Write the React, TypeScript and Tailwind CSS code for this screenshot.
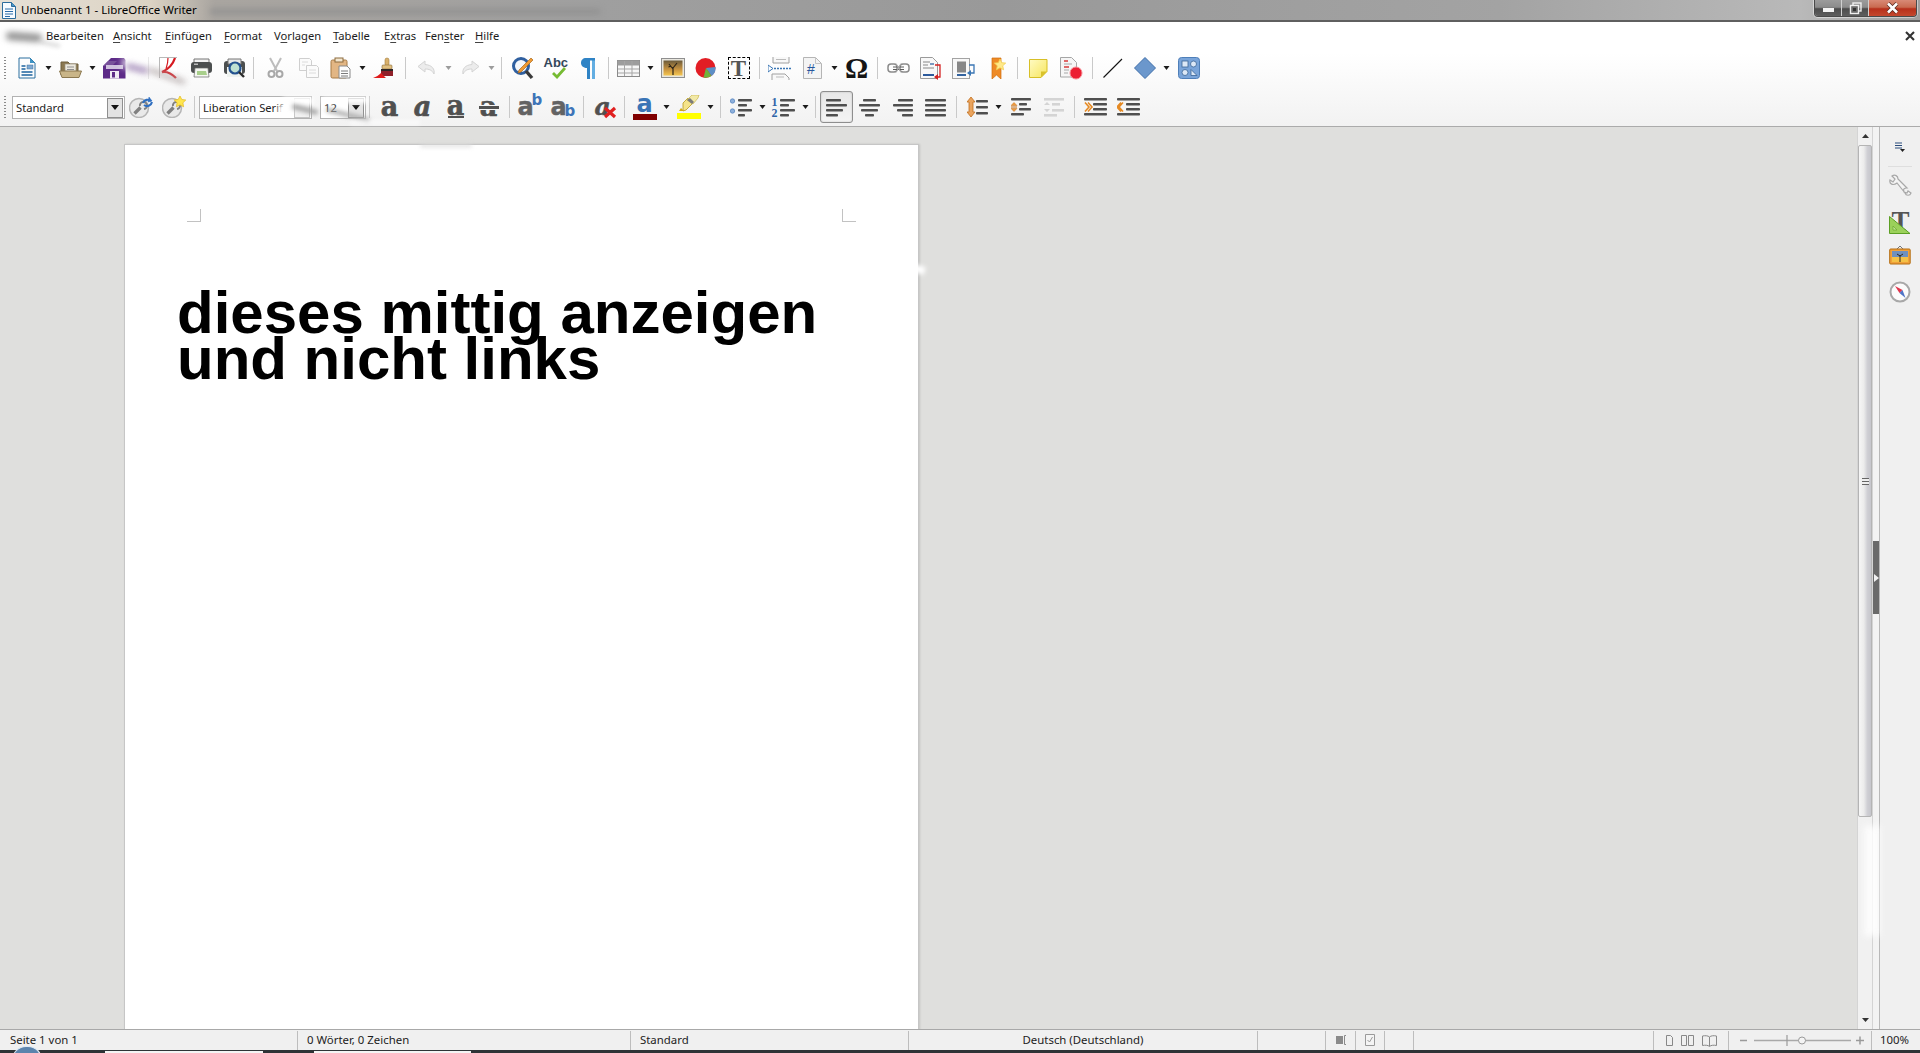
import React from "react";

type C = { children?: React.ReactNode };
const S = ({ w, h, children }: { w: number; h: number } & C) => (
  <svg width={w} height={h} viewBox={`0 0 ${w} ${h}`} className="block shrink-0" fill="none">
    {children}
  </svg>
);

/* ---------- layout atoms ---------- */
const Btn = ({ children, cls = "" }: { cls?: string } & C) => (
  <div className={`w-[33px] h-full flex items-center justify-center shrink-0 ${cls}`}>{children}</div>
);
const Dd = ({ dim = false, cls = "" }: { dim?: boolean; cls?: string }) => (
  <div className={`w-[11px] h-full flex items-center justify-center shrink-0 ${cls}`}>
    <S w={7} h={4}>
      <path d="M0.5 0h6L3.5 4z" fill={dim ? "#9c9c9c" : "#1c1c1c"} />
    </S>
  </div>
);
const Sep = ({ cls = "" }: { cls?: string }) => (
  <div className={`w-[9px] h-full flex items-center justify-center shrink-0 ${cls}`}>
    <div className="w-px h-[22px] bg-[#c9c9c9]" />
  </div>
);
const Grip = ({ cls }: { cls: string }) => (
  <div className={`h-full flex items-center shrink-0 ${cls}`}>
    <div className="ml-[4px] w-[2px] h-[23px] bg-[repeating-linear-gradient(to_bottom,#8a8a8a_0px,#8a8a8a_1px,transparent_1px,transparent_3px)]" />
  </div>
);

/* ---------- icons: toolbar 1 ---------- */
const NewDoc = () => (
  <S w={18} h={22}>
    <path d="M1 1h11l5 5v15H1z" fill="#fdfdfd" stroke="#2b6f9f" />
    <path d="M12 1l5 5h-5z" fill="#3f93c4" />
    <rect x="9" y="8" width="6" height="4" fill="#7ea9d2" stroke="#3d6f9f" strokeWidth=".5" />
    <path d="M3.5 9h4M3.5 12h4M3.5 15h11M3.5 18h11" stroke="#1d639f" strokeWidth="1.4" />
  </S>
);
const OpenF = () => (
  <S w={23} h={19}>
    <path d="M2 3h7l2 2h8v11H2z" fill="#8b7850" stroke="#6f5f3d" />
    <rect x="6" y="5" width="11" height="8" fill="#ece8dd" stroke="#9b9480" strokeWidth=".7" />
    <path d="M8 8h7M8 10.5h7" stroke="#8f8f8f" />
    <path d="M0.5 12h22l-2.5 6.5H3z" fill="#c9b588" stroke="#8b7850" />
  </S>
);
const Save = () => (
  <S w={23} h={22}>
    <path d="M0 9L8 1h13l1.500 2v18.500H0z" fill="#5d2b88" />
    <path d="M3 8h17v4H3z" fill="#cfc0de" />
    <path d="M0 9L5 4h9l-4 4H3l-1 1z" fill="#8a6aa8" opacity=".6" />
    <rect x="7" y="14" width="9" height="7.500" fill="#efeaf4" />
    <rect x="9" y="15" width="3" height="5.500" fill="#5d2b88" />
  </S>
);
const Pdf = () => (
  <S w={19} h={22}>
    <path d="M.5 21V.5h17.500" fill="#fff" stroke="#b8b8b8" />
    <path d="M.5 1h17.500v19H.5z" fill="#fff" />
    <path d="M.5 21V.5h17.500" stroke="#b8b8b8" />
    <path d="M16 1C14 7 10 12 3 15c5-1 9 1 14 6" stroke="#d61920" strokeWidth="2.300" />
    <path d="M9 1C9 6 8 9 7 12" stroke="#d61920" strokeWidth="1.200" />
  </S>
);
const Print = () => (
  <S w={23} h={20}>
    <path d="M4 1h15v6H4z" fill="#f2f2f2" stroke="#777" />
    <rect x="1" y="4" width="21" height="11" rx="3" fill="#4c4f4f" />
    <rect x="4" y="5.5" width="4" height="1.5" fill="#bbb" />
    <path d="M5 10h13l1 9H4z" fill="#f5f7f2" stroke="#666" strokeWidth=".7" />
    <path d="M7 13h9l1 4H7z" fill="#a8cf8b" />
  </S>
);
const Preview = () => (
  <S w={23} h={20}>
    <rect x="1" y="3" width="21" height="13" rx="3" fill="#4c4f4f" />
    <path d="M5 1h13v5H5z" fill="#e8e8e8" stroke="#777" />
    <path d="M4 9h15v10H4z" fill="#eef2ef" />
    <circle cx="12" cy="10" r="5.5" fill="#bfe0d2" stroke="#24528f" strokeWidth="2.2" />
    <path d="M16 14l5 5" stroke="#2b2b2b" strokeWidth="2.4" />
  </S>
);
const Cut = () => (
  <S w={17} h={22}>
    <path d="M3 1l7 13M14 1L7 14" stroke="#bdbdbd" strokeWidth="2" />
    <circle cx="4.5" cy="17" r="3" stroke="#a8a8a8" strokeWidth="2" />
    <circle cx="12.5" cy="17" r="3" stroke="#a8a8a8" strokeWidth="2" />
  </S>
);
const Copy = () => (
  <S w={20} h={20}>
    <path d="M.5.5h10l2 2v10H.5z" fill="#fbfbfb" stroke="#cfcfcf" />
    <path d="M7.5 7.5h10l2 2v10h-12z" fill="#fbfbfb" stroke="#cfcfcf" />
    <path d="M3 4h6M3 7h3M10 12h7M10 15h7" stroke="#dcdcdc" />
  </S>
);
const Paste = () => (
  <S w={21} h={22}>
    <rect x="1" y="3" width="16" height="18" rx="1.5" fill="#e2b684" stroke="#a67a44" />
    <rect x="5" y="1" width="8" height="4" fill="#f3e6cf" stroke="#8b6a3c" />
    <path d="M9 9h8l3 3v9H9z" fill="#fdfdfd" stroke="#8a8a8a" />
    <path d="M11 14h7M11 16.5h7M11 19h7" stroke="#7b7b7b" />
  </S>
);
const Brush = () => (
  <S w={23} h={22}>
    <rect x="12" y="1" width="4" height="8" rx="2" fill="#d8b06c" stroke="#a47d3a" strokeWidth=".6" />
    <rect x="9" y="8" width="10" height="4" rx="1" fill="#e0bf80" stroke="#8a6a34" strokeWidth=".6" />
    <path d="M8 12h12v7H8z" fill="#2e2626" />
    <path d="M8 14h12v5H8z" fill="#a81f2a" opacity=".8" />
    <path d="M0 21c3-1 6-3 8-5l5 5z" fill="#e01b1b" />
  </S>
);
const Undo = ({ flip = false }: { flip?: boolean }) => (
  <S w={22} h={16}>
    <g transform={flip ? "translate(22 0) scale(-1 1)" : undefined}>
      <path d="M9 1L2 6.5 9 12V9c4 0 7 1 9 5 1-5-2-9-9-9.500z" fill="#ececec" stroke="#d4d4d4" />
    </g>
  </S>
);
const Find = () => (
  <S w={24} h={24}>
    <circle cx="10" cy="10" r="7.500" fill="#f4f7fb" stroke="#2f5f9f" strokeWidth="3" />
    <path d="M15 15l6 7" stroke="#3a3a3a" strokeWidth="3.400" />
    <path d="M22 4L10 16l-3 1 1-3L20 2z" fill="#f09a33" stroke="#a7681c" strokeWidth=".7" />
  </S>
);
const AbcIc = () => (
  <div className="relative w-[24px] h-[24px]">
    <span className="block text-center text-[13px] leading-[13px] font-bold text-[#34475a] font-['Liberation_Sans',sans-serif]">Abc</span>
    <div className="absolute left-[8px] top-[11px]">
      <S w={14} h={12}>
        <path d="M1 6l4 4 8-9" stroke="#76bb33" strokeWidth="2.800" />
      </S>
    </div>
  </div>
);
const Pilcrow = () => (
  <S w={15} h={22}>
    <path d="M5 1h9v21h-3V3.500H9V22H6V11C2 11 0 8.500 0 6c0-3 2-5 5-5z" fill="#2f83c5" />
    <path d="M11 3.500h3V22h-3z" fill="#63aee2" />
  </S>
);
const TableIc = () => (
  <S w={23} h={17}>
    <rect x=".5" y=".5" width="22" height="16" fill="#f6f6f6" stroke="#8a8a8a" />
    <rect x=".5" y=".5" width="22" height="5" fill="#9d9d9d" />
    <path d="M1 9h21M1 13h21M7.500 1v15M15 1v15" stroke="#a5a5a5" />
  </S>
);
const Photo = () => (
  <S w={24} h={20}>
    <rect x=".5" y=".5" width="23" height="19" fill="#e8e6de" stroke="#8f8f8f" />
    <defs>
      <linearGradient id="sk" x1="0" y1="0" x2="0" y2="1">
        <stop offset="0" stopColor="#6a5a3a" />
        <stop offset=".6" stopColor="#c99440" />
        <stop offset="1" stopColor="#f5c64f" />
      </linearGradient>
    </defs>
    <rect x="2.500" y="2.500" width="19" height="15" fill="url(#sk)" />
    <path d="M12 17V9M12 11L8 6M12 10l4-5M10 8L7.500 9" stroke="#2c2418" strokeWidth="1.200" />
  </S>
);
const Chart = () => (
  <S w={21} h={24}>
    <circle cx="10.500" cy="12" r="10" fill="#e21d24" />
    <path d="M11 12l9.500-1a10 10 0 0 1-4 9z" fill="#5d8fc6" />
    <path d="M11 12l5.500 8a10 10 0 0 1-8 1.500z" fill="#6fb23c" />
  </S>
);
const TBox = () => (
  <div className="w-[22px] h-[22px] border border-dashed border-black flex items-center justify-center">
    <span className="text-[23px] leading-none font-bold text-[#555] font-['Liberation_Serif',serif]">T</span>
  </div>
);
const PageBreak = () => (
  <S w={23} h={23}>
    <path d="M5 0v6h16V0" fill="#f8f8f8" stroke="#a0a0a0" />
    <path d="M8 2.500h10" stroke="#bbb" />
    <path d="M0 8l5 3.500L0 15z" fill="#fff" stroke="#3a76b4" />
    <path d="M6 11.500h17" stroke="#3a76b4" strokeWidth="1.500" strokeDasharray="2 1" />
    <path d="M4 23v-6h13l4 4v2" fill="#f8f8f8" stroke="#a0a0a0" />
    <path d="M8 20h8" stroke="#bbb" />
  </S>
);
const Field = () => (
  <div className="relative w-[19px] h-[22px]">
    <S w={19} h={22}>
      <path d="M.5.500h12l6 6v15H.5z" fill="#f4f4f4" stroke="#b5b5b5" />
      <path d="M12.500.500v6h6" stroke="#c4c4c4" />
    </S>
    <span className="absolute left-[4px] top-[5px] text-[14px] leading-[14px] text-[#27569c] font-['Liberation_Sans',sans-serif]">#</span>
  </div>
);
const Omega = () => (
  <span className="text-[29px] leading-[24px] font-bold text-[#151515] font-['Liberation_Serif',serif]">Ω</span>
);
const LinkIc = () => (
  <S w={23} h={12}>
    <rect x="1" y="2" width="9" height="8" rx="3" stroke="#8a8a8a" strokeWidth="1.500" />
    <rect x="13" y="2" width="9" height="8" rx="3" stroke="#8a8a8a" strokeWidth="1.500" />
    <path d="M6 5h11M6 7.500h11" stroke="#5c5c5c" />
    <path d="M9 1.500l5 9M14 1.500l-5 9" stroke="#ababab" />
  </S>
);
const Footnote = () => (
  <S w={21} h={23}>
    <path d="M.5.500h12l5 5v16H.5z" fill="#f8f8f8" stroke="#9a9a9a" />
    <path d="M3 5h7" stroke="#888" />
    <path d="M10 7h4" stroke="#33639f" strokeWidth="1.300" />
    <path d="M3 8h5M3 11h11" stroke="#888" />
    <path d="M3 18h11" stroke="#2c5a9c" strokeWidth="2" />
    <path d="M15 8h5v12h-3" stroke="#d42222" strokeWidth="1.300" />
    <path d="M18 17v6l-4-3z" fill="#d42222" />
  </S>
);
const Endnote = () => (
  <S w={23} h={21}>
    <rect x=".5" y=".5" width="17" height="20" fill="#f8f8f8" stroke="#a3a3a3" />
    <rect x="5" y="3.500" width="9" height="11" fill="#878787" />
    <path d="M5 17h9" stroke="#33639f" strokeWidth="2" />
    <path d="M17 7h5v8h-4" stroke="#3a76b4" strokeWidth="1.300" />
    <path d="M19 12v6l-4-3z" fill="#3a76b4" />
  </S>
);
const Bookmark = () => (
  <S w={15} h={22}>
    <path d="M1 1h9v21l-4.500-4L1 22z" fill="#ee8a26" stroke="#d06f10" strokeWidth=".7" />
    <path d="M9 2l1.700 3.700 4 .4-3 2.700.9 4L9 10.800l-3.600 2 .9-4-3-2.700 4-.4z" fill="#ffe98a" stroke="#f2cf4e" strokeWidth=".8" />
  </S>
);
const Note = () => (
  <S w={19} h={19}>
    <defs>
      <linearGradient id="nt" x1="0" y1="0" x2="1" y2="1">
        <stop offset="0" stopColor="#fffbc4" />
        <stop offset="1" stopColor="#f6e55d" />
      </linearGradient>
    </defs>
    <path d="M.5.500h17.500v12L12 18.500H.5z" fill="url(#nt)" stroke="#d7bf27" />
    <path d="M18 12.500h-6v6z" fill="#d9c22b" />
  </S>
);
const Record = () => (
  <S w={23} h={23}>
    <path d="M.5.500h11l5 5V20H.5z" fill="#f6f6f6" stroke="#a6a6a6" />
    <path d="M4 4h4M4 10h5" stroke="#d83b3b" strokeWidth="1.300" />
    <path d="M4 7h8M4 13h5M4 16h4" stroke="#a8a8a8" />
    <circle cx="16" cy="16" r="6" fill="#ec1f33" stroke="#f78b93" />
  </S>
);
const LineIc = () => (
  <S w={20} h={20}>
    <path d="M.5 19.500L19 1" stroke="#111" strokeWidth="1.100" />
  </S>
);
const Shape = () => (
  <S w={22} h={22}>
    <path d="M11 .5L21.500 11 11 21.500.5 11z" fill="#6b97cc" stroke="#3f6fa9" />
  </S>
);
const More = () => (
  <S w={22} h={22}>
    <rect x=".5" y=".5" width="21" height="21" rx="3" fill="#79a4d9" stroke="#4e7fb9" />
    <rect x="4" y="4" width="6" height="6" fill="#dce8f6" stroke="#3a6496" strokeWidth=".8" />
    <circle cx="15.500" cy="7" r="3" fill="#dce8f6" stroke="#3a6496" strokeWidth=".8" />
    <circle cx="7" cy="15.500" r="3" fill="#dce8f6" stroke="#3a6496" strokeWidth=".8" />
    <path d="M13 18.500v-6l6 6z" fill="#dce8f6" stroke="#3a6496" strokeWidth=".8" />
  </S>
);

/* ---------- icons: toolbar 2 ---------- */
const Wrench = ({ extra }: { extra: React.ReactNode }) => (
  <S w={24} h={22}>
    <circle cx="10" cy="12" r="9.500" fill="#e9e9e9" stroke="#b5b5b5" strokeWidth="1.500" />
    <path d="M5.500 17.500l6-6" stroke="#808080" strokeWidth="3.400" />
    <path d="M11 10a3.500 3.500 0 1 1 4 3" stroke="#808080" strokeWidth="2" />
    {extra}
  </S>
);
const Refresh = (
  <g stroke="#2f6fc0" strokeWidth="2.100">
    <path d="M14 7a5 5 0 0 1 8-2" />
    <path d="M23 6a5 5 0 0 1-8 3" />
    <path d="M20 1l3 4-4 1z" fill="#2f6fc0" strokeWidth=".5" />
  </g>
);
const Star = (
  <path d="M18 0l1.800 3.500 4 .5-2.900 2.800.7 4-3.600-1.900-3.600 1.900.7-4L12.200 4l4-.5z" fill="#ffe64d" stroke="#e2b81d" strokeWidth=".7" />
);

const Aa = ({ cls = "" }: { cls?: string }) => (
  <span className={`text-[27px] leading-[20px] font-bold text-[#505050] font-['DejaVu_Serif',serif] [-webkit-text-stroke:0.7px_#505050] ${cls}`}>a</span>
);
const Under = () => (
  <div className="flex flex-col items-center">
    <div className="h-[19px] flex items-center"><Aa /></div>
    <div className="w-[16px] h-[2px] bg-[#505050] mt-[1px]" />
  </div>
);
const Strike = () => (
  <div className="relative flex justify-center w-[20px]">
    <Aa />
    <div className="absolute left-0 top-[8px] w-[20px] h-[3px] bg-[#505050] border-y border-[#f5f5f5] box-content" />
  </div>
);
const Script = ({ sup }: { sup: boolean }) => (
  <div className="relative w-[24px] h-[24px]">
    <div className="absolute left-0 top-[2px]">
      <span className="text-[24px] leading-[20px] font-bold text-[#636363] font-['DejaVu_Sans',sans-serif] [-webkit-text-stroke:0.5px_#636363]">a</span>
    </div>
    <span className={`absolute left-[14px] ${sup ? "-top-[2px]" : "top-[9px]"} text-[15px] leading-[15px] font-bold text-[#3d74b8] font-['DejaVu_Sans',sans-serif]`}>b</span>
  </div>
);
const Clear = () => (
  <div className="relative w-[22px] h-[24px]">
    <span className="absolute left-0 top-[1px] text-[25px] leading-[22px] italic font-bold text-[#505050] font-['DejaVu_Serif',serif] [-webkit-text-stroke:0.5px_#505050]">a</span>
    <div className="absolute left-[8px] top-[11px]">
      <S w={14} h={13}>
        <path d="M2 2l10 9M12 2L2 11" stroke="#e02020" strokeWidth="3.200" />
      </S>
    </div>
  </div>
);
const FontColor = () => (
  <div className="flex flex-col items-center w-[24px]">
    <span className="text-[24px] leading-[19px] text-[#3a74b6] font-bold font-['DejaVu_Sans',sans-serif]">a</span>
    <div className="w-[24px] h-[6px] bg-[#800000]" />
  </div>
);
const Highlight = () => (
  <div className="flex flex-col items-center w-[24px]">
    <S w={22} h={18}>
      <path d="M5 8l5-5 5 5-7 7-3 1z" fill="#f5e38a" stroke="#b89b20" strokeWidth=".8" />
      <path d="M9 5l5-5h7l-1 3-5 6z" fill="#f2e9a6" stroke="#c8b450" strokeWidth=".7" />
      <path d="M9 5l5 4 2-2-4-4z" fill="#7b7b7b" />
      <path d="M3 13l3 3H1z" fill="#d2ab14" />
    </S>
    <div className="w-[24px] h-[6px] bg-[#ffff00]" />
  </div>
);

type Bar = [number, number, number];
const Bars = ({ bars, w = 21, h = 19, children }: { bars: Bar[]; w?: number; h?: number } & C) => (
  <S w={w} h={h}>
    {bars.map(([x, y, l], i) => (
      <rect key={i} x={x} y={y} width={l} height="2.600" rx=".8" fill="#4f4f4f" />
    ))}
    {children}
  </S>
);
const Bullets = () => (
  <Bars w={22} h={19} bars={[[8, 1, 14], [8, 6, 9], [8, 11, 14], [8, 16, 7]]}>
    <circle cx="2.500" cy="3" r="2.200" fill="#8db0dc" stroke="#4d7ebb" strokeWidth=".7" />
    <circle cx="2.500" cy="13" r="2.200" fill="#8db0dc" stroke="#4d7ebb" strokeWidth=".7" />
  </Bars>
);
const Numbered = () => (
  <div className="relative w-[24px] h-[21px]">
    <Bars w={24} h={21} bars={[[8, 2, 15], [8, 7, 9], [8, 12, 15], [8, 17, 9]]} />
    <span className="absolute left-0 -top-[1px] text-[12px] leading-[12px] font-bold text-[#2e65a8] font-['Liberation_Serif',serif]">1</span>
    <span className="absolute left-0 top-[10px] text-[12px] leading-[12px] font-bold text-[#2e65a8] font-['Liberation_Serif',serif]">2</span>
  </div>
);
const LineSpacing = () => (
  <Bars w={21} h={21} bars={[[9, 3, 12], [9, 9, 12], [9, 15, 12]]}>
    <path d="M4 0l4 5H6v10h2l-4 5-4-5h2V5H0z" fill="#eaa45e" stroke="#c2701e" strokeWidth=".8" />
  </Bars>
);
const ParaSpacing = () => (
  <Bars w={20} h={19} bars={[[0, 0, 20], [8, 5, 8], [8, 10, 12], [0, 15, 13]]}>
    <path d="M3 4.500l3 3H0zM3 13.500l3-3H0z" fill="#ee9a3c" stroke="#c2701e" strokeWidth=".5" />
    <path d="M0 9h6" stroke="#c2701e" />
  </Bars>
);
const ParaSpacingOff = () => (
  <S w={20} h={19}>
    <g fill="#d4d4d4">
      <rect x="0" y="0" width="20" height="2.600" />
      <rect x="8" y="5" width="8" height="2.600" />
      <rect x="8" y="11" width="12" height="2.600" />
      <rect x="0" y="16" width="13" height="2.600" />
      <path d="M3 4l3 3H0zM3 14l3-3H0z" />
    </g>
  </S>
);
const Indent = ({ left }: { left: boolean }) => (
  <Bars w={23} h={19} bars={[[0, 0, 23], [9, 5, 14], [9, 10, 14], [0, 15, 23]]}>
    <path d={left ? "M6 4.500L2 9l4 4.500M4 4.500L0 9l4 4.500" : "M1 4.500L5 9l-4 4.500M4 4.500L8 9l-4 4.500"} stroke="#e58a24" strokeWidth="1.600" />
  </Bars>
);

/* ---------- blocks ---------- */
const TitleBar = () => (
  <div className="relative h-[22px] shrink-0 flex items-start border-b-2 border-[#5f5f5f] bg-[linear-gradient(to_right,#e6e0d6_0px,#dcd3c4_150px,#a9a5a0_215px,#9f9f9f_600px,#999999_1000px,#a3a3a3_1500px,#b9b9b9_1800px,#9f9f9f_1920px)]">
    {/* blurred window behind the glass */}
    <div className="absolute left-[210px] top-[9px] w-[390px] h-[5px] bg-[#8f8f8f] blur-[3px]" />
    <div className="relative ml-[2px] mt-[2px]">
      <S w={14} h={17}>
        <path d="M.5.500h9l4 4v12H.5z" fill="#f7fbff" stroke="#2c6c9c" />
        <path d="M9.500.500v4h4" fill="#4a96c7" stroke="#2c6c9c" />
        <path d="M3 7h8M3 9.500h8M3 12h8M3 14.500h5" stroke="#2b6ca8" />
      </S>
    </div>
    <span className="relative ml-[5px] mt-[2px] text-[11.5px] leading-[16px] text-black">Unbenannt 1 - LibreOffice Writer</span>
    <div className="relative ml-auto mr-[3px] h-[17px] flex border border-t-0 border-[#4a4a4a] rounded-b-[4px] overflow-hidden shadow-[0_0_0_1px_rgba(255,255,255,0.45)]">
      <div className="w-[27px] flex items-center justify-center border-r border-[#d0d0d0] bg-[linear-gradient(to_bottom,#9c9c9c_0%,#8c8c8c_45%,#4c4c4c_55%,#5e5e5e_100%)]">
        <div className="w-[11px] h-[4px] bg-[#f4f4f4] mt-[3px]" />
      </div>
      <div className="w-[27px] flex items-center justify-center border-r border-[#d0d0d0] bg-[linear-gradient(to_bottom,#9c9c9c_0%,#8c8c8c_45%,#4c4c4c_55%,#5e5e5e_100%)]">
        <S w={13} h={13}>
          <rect x="4" y="1" width="8" height="8" stroke="#f0f0f0" strokeWidth="1.400" />
          <rect x="1.500" y="3.500" width="8" height="8" fill="#6a6a6a" stroke="#f0f0f0" strokeWidth="1.400" />
          <rect x="4" y="6" width="3" height="3" fill="#333" />
        </S>
      </div>
      <div className="w-[47px] flex items-center justify-center bg-[linear-gradient(to_bottom,#d88a76_0%,#c96a50_45%,#b7301b_55%,#c4482e_100%)]">
        <S w={13} h={12}>
          <path d="M2 1.500l9 9M11 1.500l-9 9" stroke="#5a2a20" strokeWidth="4" />
          <path d="M2 1.500l9 9M11 1.500l-9 9" stroke="#fff" strokeWidth="2.600" />
        </S>
      </div>
    </div>
  </div>
);

const U = ({ children }: C) => <span className="underline underline-offset-2 decoration-[#444]">{children}</span>;

const MenuBar = () => (
  <div className="relative h-[28px] shrink-0 flex items-center pl-[46px] text-[11.2px] text-[#1b1b1b]">
    <div className="w-[67px]">Bearbeiten</div>
    <div className="w-[52px]"><U>A</U>nsicht</div>
    <div className="w-[59px]"><U>E</U>infügen</div>
    <div className="w-[50px]"><U>F</U>ormat</div>
    <div className="w-[59px]">V<U>o</U>rlagen</div>
    <div className="w-[51px]"><U>T</U>abelle</div>
    <div className="w-[41px]">E<U>x</U>tras</div>
    <div className="w-[50px]">Fen<U>s</U>ter</div>
    <div><U>H</U>ilfe</div>
    <div className="ml-auto mr-[5px]">
      <S w={10} h={10}>
        <path d="M1 1l8 8M9 1L1 9" stroke="#333" strokeWidth="2.100" />
      </S>
    </div>
  </div>
);

const Toolbar1 = () => (
  <div className="h-[36px] shrink-0 flex">
    <Grip cls="w-[10px]" />
    <Btn><NewDoc /></Btn><Dd />
    <Btn><OpenF /></Btn><Dd />
    <Btn><Save /></Btn><div className="w-[11px]" />
    <Sep cls="ml-[2px] opacity-40" />
    <Btn cls="-ml-px"><Pdf /></Btn>
    <Btn><Print /></Btn>
    <Btn><Preview /></Btn>
    <Sep cls="-ml-[2px]" />
    <Btn cls="ml-px"><Cut /></Btn>
    <Btn><Copy /></Btn>
    <Btn cls="-ml-px"><Paste /></Btn><Dd />
    <Btn><Brush /></Btn>
    <Sep />
    <Btn><Undo /></Btn><Dd dim />
    <Btn cls="-ml-px"><Undo flip /></Btn><Dd dim />
    <Sep />
    <Btn><Find /></Btn>
    <Btn><AbcIc /></Btn>
    <Btn><Pilcrow /></Btn>
    <Sep cls="-ml-px" />
    <Btn cls="-ml-px"><TableIc /></Btn><Dd />
    <Btn><Photo /></Btn>
    <Btn><Chart /></Btn>
    <Btn><TBox /></Btn>
    <Sep />
    <Btn cls="-ml-px"><PageBreak /></Btn>
    <Btn><Field /></Btn><Dd />
    <Btn><Omega /></Btn>
    <Sep />
    <Btn><LinkIc /></Btn>
    <Btn cls="-ml-px"><Footnote /></Btn>
    <Btn><Endnote /></Btn>
    <Btn cls="ml-[2px]"><Bookmark /></Btn>
    <Sep cls="-ml-[2px]" />
    <Btn><Note /></Btn>
    <Btn><Record /></Btn>
    <Sep />
    <Btn cls="-ml-px"><LineIc /></Btn>
    <Btn cls="-ml-px"><Shape /></Btn><Dd />
    <Btn><More /></Btn>
  </div>
);

const ComboArrow = ({ dim = false }: { dim?: boolean }) => (
  <div className={`w-[16px] h-[20px] mt-px mr-px border flex items-center justify-center shrink-0 ${dim ? "border-[#c4c4c4] bg-[#f2f2f2]" : "border-[#8f8f8f] bg-[#e3e3e3]"}`}>
    {!dim && (
      <S w={8} h={5}>
        <path d="M0 0h8L4 5z" fill="#111" />
      </S>
    )}
  </div>
);

const Toolbar2 = () => (
  <div className="h-[40px] shrink-0 flex pt-[5px] pb-[3px] items-stretch">
    <Grip cls="w-[12px]" />
    <div className="self-center w-[113px] h-[23px] bg-white border border-[#b2b2b2] flex justify-between text-[11.2px] text-[#222]">
      <span className="pl-[3px] leading-[21px]">Standard</span>
      <ComboArrow />
    </div>
    <Btn cls="-ml-px"><Wrench extra={Refresh} /></Btn>
    <Btn><Wrench extra={Star} /></Btn>
    <Sep />
    <div className="self-center w-[113px] h-[23px] bg-white border border-[#b2b2b2] flex justify-between text-[11.2px] text-[#222]">
      <span className="pl-[3px] leading-[21px] whitespace-nowrap">Liberation Serif</span>
      <ComboArrow dim />
    </div>
    <div className="self-center ml-[8px] w-[46px] h-[23px] bg-white border border-[#b2b2b2] flex justify-between text-[11.2px] text-[#222]">
      <span className="pl-[3px] leading-[21px]">12</span>
      <ComboArrow />
    </div>
    <div className="w-[6px] h-full flex items-center justify-center shrink-0">
      <div className="w-px h-[22px] bg-[#c9c9c9]" />
    </div>
    <Btn cls="ml-px"><Aa /></Btn>
    <Btn><Aa cls="italic" /></Btn>
    <Btn><Under /></Btn>
    <Btn><Strike /></Btn>
    <Sep />
    <Btn cls="-ml-px"><Script sup /></Btn>
    <Btn><Script sup={false} /></Btn>
    <Sep />
    <Btn cls="ml-px"><Clear /></Btn>
    <Sep cls="-ml-[2px]" />
    <Btn cls="-ml-px"><FontColor /></Btn><Dd />
    <Btn><Highlight /></Btn><Dd />
    <Sep />
    <Btn cls="-ml-px"><Bullets /></Btn><Dd />
    <Btn cls="-ml-px"><Numbered /></Btn><Dd />
    <Sep />
    <Btn cls="border border-[#8e8e8e] rounded-[3px] bg-[linear-gradient(to_bottom,#e8e8e8,#f4f4f4)] shadow-[inset_0_0_2px_rgba(0,0,0,0.2)]">
      <Bars bars={[[0, 1, 15], [0, 6, 21], [0, 11, 17], [0, 16, 12]]} />
    </Btn>
    <Btn><Bars bars={[[4, 1, 13], [0, 6, 21], [2, 11, 17], [6, 16, 9]]} /></Btn>
    <Btn><Bars bars={[[6, 1, 15], [1, 6, 20], [5, 11, 16], [10, 16, 11]]} /></Btn>
    <Btn><Bars bars={[[0, 1, 21], [0, 6, 21], [0, 11, 21], [0, 16, 21]]} /></Btn>
    <Sep />
    <Btn><LineSpacing /></Btn>
    <Dd cls="-ml-px" />
    <Btn><ParaSpacing /></Btn>
    <Btn><ParaSpacingOff /></Btn>
    <Sep />
    <Btn><Indent left={false} /></Btn>
    <Btn><Indent left /></Btn>
  </div>
);

const Scrollbar = () => (
  <div className="w-[16px] shrink-0 flex flex-col bg-[#f1f1f1] border-l border-r border-[#d4d4d4]">
    <div className="h-[18px] flex items-center justify-center">
      <S w={7} h={4}>
        <path d="M3.500 0L7 4H0z" fill="#333" />
      </S>
    </div>
    <div className="h-[672px] rounded-[2px] border border-[#b4b4b4] bg-[linear-gradient(to_right,#f6f6f6_0%,#ececec_40%,#cfcfd4_70%,#c6c6cc_100%)] flex items-center justify-center">
      <div className="w-[7px] h-[7px] bg-[repeating-linear-gradient(to_bottom,#666_0px,#666_1px,#eee_1px,#eee_3px)]" />
    </div>
    <div className="flex-1" />
    <div className="h-[18px] flex items-center justify-center">
      <S w={7} h={4}>
        <path d="M0 0h7L3.500 4z" fill="#333" />
      </S>
    </div>
  </div>
);

const Deck = () => (
  <div className="flex w-[47px] shrink-0">
    <div className="w-[7px] shrink-0 bg-[#f3f3f3] border-r border-[#b8b8b8] flex flex-col">
      <div className="mt-[414px] h-[73px] bg-[#6a6a6a] flex items-center justify-center">
        <S w={5} h={8}>
          <path d="M0 0l5 4-5 4z" fill="#f2f2f2" />
        </S>
      </div>
    </div>
    <div className="flex-1 bg-[#f0f0f0] flex flex-col items-center pt-[15px]">
      <S w={10} h={10}>
        <path d="M0 1h7M0 3.500h7M0 6h7" stroke="#2b4c7c" strokeWidth="1.100" />
        <path d="M5 7h5L7.500 10z" fill="#222" />
      </S>
      <div className="mt-[14px] w-[24px] h-px bg-[#dedede]" />
      <div className="mt-[7px]">
        <S w={23} h={24}>
          <path d="M3 2l3 3-2 3-3-2C0 10 4 12 8 9l8 10c1 3 5 3 6 0l-3-2-1 2-3-1c-1-3 0-4 3-4l-9-9C9 2 6 0 3 2z" fill="#f4f4f4" stroke="#a8a8a8" strokeWidth="1.200" />
        </S>
      </div>
      <div className="mt-[13px] relative w-[23px] h-[23px]">
        <span className="absolute left-[3px] -top-[2px] text-[27px] leading-[25px] font-bold text-[#555] font-['Liberation_Serif',serif]">T</span>
        <div className="absolute left-0 top-[5px]">
          <S w={22} h={18}>
            <path d="M.5.500L21 17.500H.5z" fill="#9bd15a" stroke="#5c9f24" />
            <path d="M4 10l4 4H4z" fill="#bfe58f" stroke="#6ba82f" strokeWidth=".7" />
          </S>
        </div>
      </div>
      <div className="mt-[11px]">
        <S w={22} h={20}>
          <path d="M8 4l3-3 3 3" stroke="#777" />
          <rect x=".7" y="4" width="20.500" height="15" rx="1" fill="#f1a13a" stroke="#b46d12" />
          <rect x="3" y="6" width="16" height="11" fill="#6f90bd" />
          <rect x="3" y="12" width="16" height="5" fill="#f4c246" />
          <path d="M11 17v-7M11 11l-3-2M11 11l3-2" stroke="#33281a" />
        </S>
      </div>
      <div className="mt-[16px]">
        <S w={22} h={22}>
          <circle cx="11" cy="11" r="9.500" fill="#fbfbfb" stroke="#a8a8a8" strokeWidth="2" />
          <path d="M6 5l7.500 4-3 3z" fill="#e1344a" />
          <path d="M16.500 17l-6-5 3-3z" fill="#4f73c6" />
        </S>
      </div>
    </div>
  </div>
);

const Cell = ({ cls, children }: { cls: string } & C) => (
  <div className={`h-[19px] self-center border-r border-[#bdbdbd] flex items-center shrink-0 ${cls}`}>{children}</div>
);

const StatusBar = () => (
  <div className="h-[21px] shrink-0 flex border-t border-[#a8a8a8] bg-[#f0f0f0] text-[11.4px] text-[#1c1c1c]">
    <Cell cls="w-[298px] pl-[10px]">Seite 1 von 1</Cell>
    <Cell cls="w-[333px] pl-[9px]">0 Wörter, 0 Zeichen</Cell>
    <Cell cls="w-[278px] pl-[9px]">Standard</Cell>
    <Cell cls="w-[349px] justify-center">Deutsch (Deutschland)</Cell>
    <Cell cls="w-[68px]" />
    <Cell cls="w-[30px] justify-center">
      <S w={12} h={12}>
        <rect x="1" y="2" width="7" height="8" fill="#8a8a8a" />
        <path d="M11 1.500H9.500v9H11" stroke="#8a8a8a" />
      </S>
    </Cell>
    <Cell cls="w-[29px] justify-center">
      <S w={12} h={14}>
        <path d="M1.500 1.500h9v11h-9z" fill="#f4f4f4" stroke="#9a9a9a" />
        <path d="M3.500 7l2 2 3-5" stroke="#9a9a9a" />
      </S>
    </Cell>
    <Cell cls="w-[29px]" />
    <Cell cls="w-[240px]" />
    <Cell cls="w-[75px] justify-center gap-[5px]">
      <S w={11} h={13}>
        <path d="M2.500 1.500h4l2 2v8h-6z" stroke="#888" />
      </S>
      <S w={16} h={13}>
        <path d="M1.500 1.500h5v10h-5zM8.500 1.500h5v10h-5z" stroke="#888" />
      </S>
      <S w={17} h={13}>
        <path d="M8.500 3C7 1.500 4 1.500 1.500 2v9.500c2.500-.5 5.500-.5 7 1 1.500-1.500 4.500-1.500 7-1V2c-2.500-.5-5.500-.5-7 1zv9" stroke="#888" />
      </S>
    </Cell>
    <Cell cls="w-[143px]">
      <S w={142} h={17}>
        <path d="M11 8.500h7" stroke="#9a9a9a" strokeWidth="1.500" />
        <path d="M25 8.500h97" stroke="#a9a9a9" strokeWidth="1.500" />
        <path d="M58 3v11" stroke="#9a9a9a" strokeWidth="1.200" />
        <circle cx="73" cy="8.500" r="3.500" fill="#f4f4f4" stroke="#9a9a9a" />
        <path d="M127 8.500h8M131 4.500v8" stroke="#9a9a9a" strokeWidth="1.500" />
      </S>
    </Cell>
    <div className="flex-1 self-center pl-[8px]">100%</div>
  </div>
);

const Taskbar = () => (
  <div className="relative h-[3px] shrink-0 flex items-end bg-[#2e3336]">
    <div className="absolute left-[12px] -top-[4px] w-[30px] h-[14px] rounded-t-full bg-[#5b84ad] border border-[#dfe9f3]" />
    <div className="ml-[105px] w-[158px] h-[2px] bg-[#f4f4f4]" />
    <div className="ml-[51px] w-[157px] h-[2px] bg-[#f4f4f4]" />
  </div>
);

const Smears = () => (
  <>
    <div className="absolute left-[6px] top-[33px] w-[36px] h-[8px] rounded-full bg-[#8f8f8f] blur-[3px] rotate-[4deg]" />
    <div className="absolute left-[40px] top-[43px] w-[20px] h-[2px] bg-[#bdbdbd] blur-[2px] rotate-[12deg]" />
    <div className="absolute left-[122px] top-[58px] w-[12px] h-[10px] bg-white blur-[3px] opacity-80" />
    <div className="absolute left-[126px] top-[66px] w-[22px] h-[5px] bg-[#9a7fb2] blur-[3px] rotate-[14deg]" />
    <div className="absolute left-[148px] top-[74px] w-[38px] h-[4px] bg-[#b0a6a6] blur-[3px] rotate-[20deg]" />
    <div className="absolute left-[283px] top-[97px] w-[30px] h-[8px] bg-white blur-[2px]" />
    <div className="absolute left-[278px] top-[105px] w-[14px] h-[10px] bg-white blur-[2px]" />
    <div className="absolute left-[292px] top-[107px] w-[26px] h-[5px] bg-[#a4a4a4] blur-[2px] rotate-[14deg]" />
    <div className="absolute left-[322px] top-[97px] w-[46px] h-[6px] bg-white blur-[2px]" />
    <div className="absolute left-[326px] top-[113px] w-[44px] h-[4px] bg-[#a8a8a8] blur-[2px] rotate-[14deg]" />
    <div className="absolute left-[350px] top-[121px] w-[70px] h-[3px] bg-white blur-[2px]" />
    <div className="absolute left-[420px] top-[144px] w-[52px] h-[3px] rounded-full bg-[#dcdcdc] blur-[2px]" />
    <div className="absolute left-[860px] top-[258px] w-[66px] h-[8px] rotate-[16deg] bg-white blur-[2px]" />
    <div className="absolute left-[1864px] top-[826px] w-[16px] h-[110px] bg-white blur-[3px] opacity-80" />
  </>
);

export default function App() {
  return (
    <div className="relative w-[1920px] h-[1053px] overflow-hidden flex flex-col bg-[#dfdfdd] font-['Noto_Sans',sans-serif]">
      <TitleBar />
      <div className="shrink-0 bg-[linear-gradient(to_bottom,#ffffff_0%,#ffffff_30%,#f2f2f2_100%)] border-b border-[#ababab]">
        <MenuBar />
        <Toolbar1 />
        <Toolbar2 />
      </div>
      <div className="flex-1 min-h-0 flex">
        <div className="flex-1 min-w-0 overflow-hidden pl-[124px] pt-[17px]">
          <div className="w-[795px] h-[900px] bg-white border border-[#c6c6c6] shadow-[1px_0_2px_rgba(0,0,0,0.12)] pt-[64px] px-[62px]">
            <div className="flex justify-between">
              <div className="w-[14px] h-[13px] border-r border-b border-[#c2c2c2]" />
              <div className="w-[14px] h-[13px] border-l border-b border-[#c2c2c2]" />
            </div>
            <div className="mt-[68px] -ml-[10px] text-[60px] leading-[46px] font-bold text-black font-['Liberation_Sans',sans-serif] whitespace-nowrap">
              <div>dieses mittig anzeigen</div>
              <div>und nicht links</div>
            </div>
          </div>
        </div>
        <Scrollbar />
        <Deck />
      </div>
      <StatusBar />
      <Taskbar />
      <Smears />
    </div>
  );
}
